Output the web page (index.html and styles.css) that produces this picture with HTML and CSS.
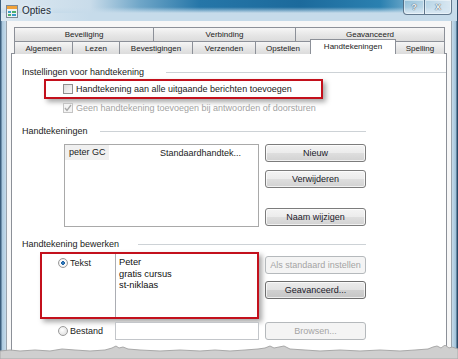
FILE: index.html
```html
<!DOCTYPE html>
<html>
<head>
<meta charset="utf-8">
<link rel="stylesheet" href="styles.css">
</head>
<body>
<div class="window">
  <div class="titlebar">
    <svg class="app-icon" width="12" height="13" viewBox="0 0 12 13">
      <rect x="0.5" y="0.5" width="11" height="12" fill="#eef2f5" stroke="#7d8a96"/>
      <rect x="1" y="1" width="10" height="3" fill="#f0a23a"/>
      <rect x="2" y="6" width="3" height="2" fill="#3a9bc8"/>
      <rect x="6" y="6" width="4" height="2" fill="#4db06a"/>
      <rect x="2" y="9" width="3" height="2" fill="#4db06a"/>
      <rect x="6" y="9" width="4" height="2" fill="#3a9bc8"/>
    </svg>
    <span class="title">Opties</span>
    <div class="caption-btns">
      <span class="cap help">?</span>
      <span class="cap close">X</span>
    </div>
  </div>
  <div class="client">
    <div class="tabs">
      <div class="tabrow toprow">
        <div class="tab">Beveiliging</div>
        <div class="tab">Verbinding</div>
        <div class="tab last">Geavanceerd</div>
      </div>
      <div class="tabrow bottomrow">
        <div class="tab">Algemeen</div>
        <div class="tab">Lezen</div>
        <div class="tab">Bevestigingen</div>
        <div class="tab">Verzenden</div>
        <div class="tab">Opstellen</div>
        <div class="tab selected">Handtekeningen</div>
        <div class="tab last">Spelling</div>
      </div>
    </div>
    <div class="panel">
      <div class="group-head g1"><span>Instellingen voor handtekening</span><i class="rule"></i></div>
      <div class="redbox check-box-row">
        <span class="checkbox"></span>
        <span class="label">Handtekening aan alle uitgaande berichten toevoegen</span>
      </div>
      <div class="check-row disabled">
        <span class="checkbox checked">
          <svg width="8" height="8" viewBox="0 0 8 8"><path d="M1 4 L3 6.5 L7 1" fill="none" stroke="#a8a8a8" stroke-width="1.3"/></svg>
        </span>
        <span class="label">Geen handtekening toevoegen bij antwoorden of doorsturen</span>
      </div>

      <div class="group-head g2 narrow"><span>Handtekeningen</span><i class="rule"></i></div>
      <div class="sig-list-area">
        <div class="listbox">
          <div class="list-row">
            <span class="cell-name">peter GC</span>
            <span class="cell-type">Standaardhandtek...</span>
          </div>
        </div>
        <div class="btn-col">
          <div class="btn">Nieuw</div>
          <div class="btn gap8">Verwijderen</div>
          <div class="btn gap20">Naam wijzigen</div>
        </div>
      </div>

      <div class="group-head g3 narrow"><span>Handtekening bewerken</span><i class="rule"></i></div>
      <div class="edit-area">
        <div class="redbox text-box-row">
          <div class="radio-cell">
            <span class="radio on"></span>
            <span class="label">Tekst</span>
          </div>
          <div class="textarea">Peter<br>gratis cursus<br>st-niklaas</div>
        </div>
        <div class="btn-col top4">
          <div class="btn disabled">Als standaard instellen</div>
          <div class="btn default gap7">Geavanceerd...</div>
        </div>
        <div class="file-row">
          <div class="radio-cell mid">
            <span class="radio"></span>
            <span class="label">Bestand</span>
          </div>
          <div class="inputbox"></div>
        </div>
        <div class="btn disabled">Browsen...</div>
      </div>
    </div>
  </div>
  <svg class="torn" width="458" height="14" viewBox="0 0 458 14">
    <polygon fill="#cfcfcf" stroke="#a9a9a9" stroke-width="1" points="0,6 10,5 20,6 35,5 50,6 62,4 75,5 90,6 105,5 112,3 116,1 119,3 123,2 128,4 140,5 160,6 180,5 200,6 215,5 230,6 245,5 258,4 265,3 270,1 274,3 279,2 284,1 290,4 305,5 320,6 340,5 360,6 380,5 400,6 415,5 428,4 433,2 437,1 441,3 445,0 449,3 452,2 458,4 458,14 0,14"/>
  </svg>
</div>
</body>
</html>
```

FILE: styles.css
```css
* { box-sizing: border-box; }
html, body { margin: 0; padding: 0; }
body {
  width: 458px;
  height: 359px;
  overflow: hidden;
  font-family: "Liberation Sans", Arial, sans-serif;
  font-size: 9px;
  color: #1b1b1b;
  background: #c8dbe9;
}
.window {
  position: relative;
  width: 458px;
  height: 359px;
  overflow: hidden;
  padding: 0 6px;
  background: linear-gradient(to right, #3c5e7c 0, #3c5e7c 1px, #a9c8de 2px, #c6dbea 6px, #c6dbea 452px, #9fc1d9 456px, #2a4a68 457px);
}
.titlebar {
  height: 21px;
  margin: 0 -6px;
  padding-left: 6px;
  display: flex;
  align-items: center;
  background-color: #c6dbea;
  background-image:
    linear-gradient(to bottom, rgba(198,219,234,0) 0, rgba(198,219,234,0) 55%, rgba(198,219,234,1) 100%),
    linear-gradient(to right, rgba(220,232,241,1) 0, rgba(201,220,234,0) 90px),
    linear-gradient(to right, #c9dcea 0, #c9dcea 90px, #6fa6c8 140px, #2576a8 200px, #1c6a9c 300px, #2a80b0 380px, #86b8d4 420px, #c9dcea 450px);
  background-size: 100% 13px, 100% 21px, 100% 13px;
  background-repeat: no-repeat;
  background-position: 0 0, 0 0, 0 0;
  box-shadow: inset 1px 0 #3c5e7c, inset -1px 0 #2a4a68;
}
.app-icon { flex: none; margin-top: 2px; }
.title {
  margin-left: 4px;
  font-size: 10px;
  color: #1e2a34;
  text-shadow: 0 0 4px rgba(255,255,255,0.9);
  flex: 1;
}
.caption-btns {
  display: flex;
  align-self: flex-start;
  margin-right: 6px;
}
.cap {
  height: 15px;
  display: flex;
  align-items: center;
  justify-content: center;
  border: 1px solid rgba(50,75,100,0.7);
  border-top: none;
  background: linear-gradient(to bottom, rgba(255,255,255,0.3), rgba(220,235,245,0.7));
  box-shadow: inset 0 0 0 1px rgba(255,255,255,0.45);
  color: #eef3f7;
  font-size: 9px;
  font-weight: bold;
  text-shadow: 0 0 1px #4a5a68, 0 0 1px #4a5a68;
}
.help { width: 22px; border-radius: 0 0 0 4px; }
.close { width: 27px; border-left: none; border-radius: 0 0 4px 0; }

.client {
  height: 338px;
  background: #f7f7f7;
  border-left: 1px solid #9aa4ad;
  border-right: 1px solid #9aa4ad;
  padding-top: 6px;
}
.tabs { margin-left: 7px; width: 431px; font-size: 8px; color: #222; }
.tabrow { display: grid; }
.toprow { grid-template-columns: 139px 142px 150px; height: 14px; }
.bottomrow { grid-template-columns: 58px 47px 73px 63px 55px 85px 50px; height: 12px; }
.tab {
  border-top: 1px solid #8c9098;
  border-left: 1px solid #8c9098;
  background: linear-gradient(to bottom, #f6f6f6, #e6e6e6 55%, #dcdcdc);
  display: flex;
  align-items: center;
  justify-content: center;
  white-space: nowrap;
}
.tab.last { border-right: 1px solid #8c9098; }
.tab.selected {
  position: relative;
  z-index: 1;
  margin-top: -2px;
  height: 15px;
  background: #ffffff;
  border-right: 1px solid #8c9098;
  margin-right: -1px;
  padding-bottom: 2px;
}
.panel {
  margin-left: 4px;
  width: 436px;
  height: 310px;
  background: #ffffff;
  border: 1px solid #8c9098;
  padding: 13px 0 0 10px;
}
.group-head {
  display: flex;
  align-items: center;
  height: 11px;
  line-height: 11px;
  color: #222;
}
.group-head.narrow { width: 344px; }
.group-head:not(.narrow) { width: 424px; }
.rule { flex: 1; height: 1px; background: #cdd2d6; }
.g1 .rule { margin-left: 22px; }
.g2 .rule { margin-left: 12px; }
.g3 .rule { margin-left: 19px; }
.g2 { margin-top: 13px; }
.g3 { margin-top: 12px; }

.redbox {
  border: 2px solid #c3101c;
  box-shadow: 3px 3px 5px rgba(0,0,0,0.35);
}
.check-box-row {
  margin-top: 1px;
  margin-left: 22px;
  width: 279px;
  height: 20px;
  display: flex;
  align-items: center;
  padding-left: 17px;
}
.checkbox {
  flex: none;
  width: 10px;
  height: 10px;
  border: 1px solid #8f8f8f;
  background: linear-gradient(135deg, #dcdcdc, #fafafa);
  display: flex;
  align-items: center;
  justify-content: center;
  margin-right: 3px;
}
.check-row {
  margin-top: 3px;
  margin-left: 41px;
  height: 11px;
  display: flex;
  align-items: center;
}
.check-row.disabled { color: #a2a2a2; }
.checkbox.checked { border-color: #c4c4c4; background: #f4f4f4; }

.sig-list-area {
  margin-top: 7px;
  margin-left: 42px;
  display: grid;
  grid-template-columns: 195px 101px;
  column-gap: 6px;
}
.listbox {
  height: 83px;
  border: 1px solid #a9a9a9;
  padding: 0;
}
.list-row { display: flex; height: 15px; align-items: center; }
.cell-name {
  width: 44px;
  height: 15px;
  line-height: 15px;
  padding-left: 4px;
  background: #f0f0f0;
}
.cell-type { margin-left: 51px; }
.btn-col { display: flex; flex-direction: column; }
.btn {
  height: 18px;
  border: 1px solid #7c7c7c;
  border-radius: 3px;
  background: linear-gradient(to bottom, #f4f4f4 0, #ececec 48%, #dedede 52%, #d2d2d2 100%);
  box-shadow: inset 0 0 0 1px rgba(255,255,255,0.7);
  text-align: center;
  line-height: 16px;
  color: #1a1a2a;
  white-space: nowrap;
}
.btn.gap8 { margin-top: 8px; }
.btn.gap20 { margin-top: 20px; }
.btn.gap7 { margin-top: 7px; }
.btn.disabled {
  border-color: #b5b9bc;
  background: #f4f4f4;
  color: #a4a4a4;
  box-shadow: none;
}
.btn.default {
  border-color: #6e6e6e;
  background: linear-gradient(to bottom, #ececec 0, #e2e2e2 48%, #d0d0d0 52%, #c6c6c6 100%);
}
.top4 { margin-top: 4px; }

.edit-area {
  margin-top: 2px;
  margin-left: 18px;
  display: grid;
  grid-template-columns: 219px 101px;
  column-gap: 6px;
  row-gap: 3px;
}
.text-box-row {
  height: 67px;
  display: grid;
  grid-template-columns: 73px 142px;
}
.radio-cell {
  display: flex;
  align-items: center;
  height: 10px;
  margin-top: 4px;
  padding-left: 16px;
}
.radio-cell.mid { margin-top: 0; height: 18px; padding-left: 18px; }
.radio {
  flex: none;
  width: 10px;
  height: 10px;
  border-radius: 50%;
  border: 1px solid #9a9a9a;
  background: radial-gradient(circle at 40% 40%, #ffffff, #d8d8d8);
  margin-right: 2px;
}
.radio.on {
  background: radial-gradient(circle, #3d8fd0 0, #1e5fa0 30%, #ffffff 38%, #dcdcdc 100%);
}
.textarea {
  height: 63px;
  border-left: 1px solid #abadb3;
  padding: 3px 0 0 3px;
  line-height: 11.7px;
  font-size: 9.3px;
  color: #111;
}
.file-row {
  display: grid;
  grid-template-columns: 75px 144px;
  height: 18px;
}
.inputbox {
  height: 18px;
  border: 1px solid #c3c6ca;
  background: #fff;
}
.torn {
  position: absolute;
  left: 0;
  bottom: 0;
  display: block;
}
```
